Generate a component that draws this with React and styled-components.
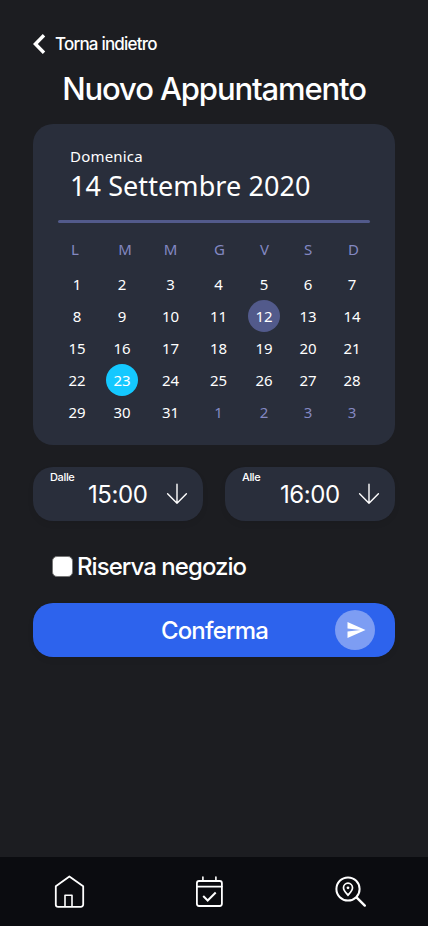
import React from "react";
import styled, { createGlobalStyle } from "styled-components";

const GlobalStyle = createGlobalStyle`
  * { box-sizing: border-box; }
  body { margin: 0; background: #1c1d21; }
  button { font: inherit; color: inherit; border: 0; padding: 0; background: none; }
`;

const Screen = styled.main`
  display: flex;
  flex-direction: column;
  width: 428px;
  height: 926px;
  overflow: hidden;
  background: #1c1d21;
  color: #fff;
  font-family: Inter, "Liberation Sans", sans-serif;
  font-weight: 500;
`;

const Content = styled.div`
  flex: 1;
  display: flex;
  flex-direction: column;
  padding: 33px 33px 0;
`;

const BackButton = styled.button`
  display: flex;
  align-items: center;
  align-self: flex-start;
  gap: 9px;
  height: 22px;
  font-size: 17px;
  letter-spacing: -0.8px;
  white-space: nowrap;
`;

const Title = styled.h1`
  margin: 14px 0 0;
  height: 55px;
  line-height: 40px;
  text-align: center;
  font-size: 31px;
  font-weight: 500;
  letter-spacing: -1.12px;
  white-space: nowrap;
`;

const Calendar = styled.section`
  height: 321px;
  padding: 20px 20px 0;
  border-radius: 20px;
  background: #292e3b;
  font-family: "Noto Sans", "Open Sans", sans-serif;
  font-weight: 400;
`;

const Weekday = styled.div`
  padding-left: 17px;
  line-height: 24px;
  font-size: 15px;
  letter-spacing: 0.2px;
`;

const FullDate = styled.div`
  padding-left: 17px;
  line-height: 36px;
  font-size: 27px;
  letter-spacing: 0.08px;
  white-space: nowrap;
`;

const Divider = styled.div`
  width: 312px;
  height: 3px;
  margin: 16px 0 0 5px;
  border-radius: 2px;
  background: #525a8b;
`;

const WeekHeader = styled.div`
  display: grid;
  grid-template-columns: 44px 56px 35px 63px 27px 60px 31px;
  margin-top: 14px;
  height: 24px;
  line-height: 24px;
  text-align: center;
  font-size: 15px;
  color: #8388c2;
`;

const Days = styled.div`
  display: grid;
  grid-template-columns: 44px 46px 51px 45px 46px 42px 46px;
  grid-auto-rows: 32px;
  justify-items: center;
  margin: 7px 0 0 2px;
`;

const Day = styled.span`
  width: 32px;
  height: 32px;
  border-radius: 50%;
  line-height: 33px;
  text-align: center;
  font-size: 15px;
  color: ${(p) => (p.$muted ? "#8388c2" : "#fff")};
  background: ${(p) => p.$fill || "transparent"};
`;

const TimeRow = styled.div`
  display: flex;
  justify-content: space-between;
  margin-top: 22px;
`;

const TimeField = styled.button`
  position: relative;
  display: flex;
  align-items: center;
  width: 170px;
  height: 54px;
  padding-left: 55px;
  border-radius: 20px;
  background: #292e3b;
  box-shadow: 0 3px 6px rgba(0, 0, 0, 0.06);
`;

const TimeLabel = styled.span`
  position: absolute;
  left: 17px;
  top: 3px;
  line-height: 14px;
  font-size: 11px;
  font-weight: 500;
  letter-spacing: -0.35px;
`;

const TimeValue = styled.span`
  width: 78px;
  text-align: left;
  font-size: 24px;
  font-weight: 400;
  letter-spacing: -0.4px;
  white-space: nowrap;
`;

const Reserve = styled.label`
  display: flex;
  align-items: center;
  gap: 4px;
  height: 32px;
  margin: 29px 0 0 19px;
  font-size: 24px;
  letter-spacing: -0.95px;
  white-space: nowrap;
`;

const Checkbox = styled.input`
  appearance: none;
  flex: none;
  width: 21px;
  height: 21px;
  margin: 0;
  border: 1px solid #767676;
  border-radius: 5px;
  background: #fff;
`;

const Confirm = styled.button`
  display: grid;
  grid-template-columns: 1fr 40px;
  align-items: center;
  height: 54px;
  margin-top: 21px;
  padding: 0 20px;
  border-radius: 20px;
  background: #2d63ed;
  box-shadow: 0 3px 6px rgba(0, 0, 0, 0.06);
  font-size: 24px;
  letter-spacing: -0.8px;
`;

const ConfirmText = styled.span`
  padding-left: 41px;
  text-align: center;
`;

const SendBadge = styled.span`
  display: grid;
  place-items: center;
  width: 40px;
  height: 40px;
  border-radius: 50%;
  background: #7d9df3;
`;

const NavBar = styled.nav`
  flex: none;
  display: grid;
  grid-template-columns: 140px 142px 36px;
  height: 69px;
  padding: 17px 0 0 51px;
  background: #0b0c10;
`;

const Icon = styled.svg`
  display: block;
  flex: none;
  fill: none;
  stroke: #fff;
  overflow: visible;
`;

const HEADERS = ["L", "M", "M", "G", "V", "S", "D"];
const DAYS = [...Array.from({ length: 31 }, (_, i) => ({ n: i + 1 })),
  ...[1, 2, 3, 3].map((n) => ({ n, muted: true }))];
const FILLS = { 12: "#525a8b", 23: "#14c8ff" };

function TimePicker({ label, value }) {
  return (
    <TimeField>
      <TimeLabel>{label}</TimeLabel>
      <TimeValue>{value}</TimeValue>
      <Icon width="22" height="22" viewBox="0 0 22 22" strokeWidth="1.4" strokeLinecap="round" strokeLinejoin="round">
        <path d="M11 1.2V20.2M1.6 10.8l9.4 9.4 9.4-9.4" />
      </Icon>
    </TimeField>
  );
}

export default function App() {
  return (
    <Screen>
      <GlobalStyle />
      <Content>
        <BackButton>
          <Icon width="13" height="20" viewBox="0 0 13 20" strokeWidth="3.4">
            <path d="M11 1.2 2.4 10l8.6 8.8" />
          </Icon>
          Torna indietro
        </BackButton>
        <Title>Nuovo Appuntamento</Title>
        <Calendar>
          <Weekday>Domenica</Weekday>
          <FullDate>14 Settembre 2020</FullDate>
          <Divider />
          <WeekHeader>
            {HEADERS.map((h, i) => <span key={i}>{h}</span>)}
          </WeekHeader>
          <Days>
            {DAYS.map((d, i) => (
              <Day key={i} $muted={d.muted} $fill={FILLS[d.n]}>{d.n}</Day>
            ))}
          </Days>
        </Calendar>
        <TimeRow>
          <TimePicker label="Dalle" value="15:00" />
          <TimePicker label="Alle" value="16:00" />
        </TimeRow>
        <Reserve>
          <Checkbox type="checkbox" />
          Riserva negozio
        </Reserve>
        <Confirm>
          <ConfirmText>Conferma</ConfirmText>
          <SendBadge>
            <Icon width="18" height="16" viewBox="0 0 18 16" stroke="none">
              <path d="M0 0v6.4L13 8 0 9.6V16L18 8z" fill="#fff" stroke="none" transform="translate(1.5 0)" />
            </Icon>
          </SendBadge>
        </Confirm>
      </Content>
      <NavBar>
        <Icon width="36" height="36" viewBox="0 0 36 36" strokeWidth="1.8" strokeLinejoin="round">
          <path d="M4.8 12.2 18.4 2.4l13.8 9.8v18.2a2.4 2.4 0 0 1-2.4 2.4H7.2a2.4 2.4 0 0 1-2.4-2.4z" />
          <path d="M14 32.8V21.3h7v11.5" strokeWidth="1.6" />
        </Icon>
        <Icon width="36" height="36" viewBox="0 0 36 36" strokeWidth="1.8" strokeLinecap="round" strokeLinejoin="round">
          <rect x="5.9" y="7" width="25" height="25" rx="2.2" />
          <path d="M5.9 12.6h25M11.9 3v4M24.9 3v4" strokeWidth="1.6" />
          <path d="m12.2 22 4.5 4.5 8-8" strokeWidth="2" strokeLinecap="butt" strokeLinejoin="miter" />
        </Icon>
        <Icon width="36" height="36" viewBox="0 0 36 36" strokeWidth="2" strokeLinecap="round">
          <circle cx="15" cy="15" r="11.6" />
          <path d="m23.8 23.6 8 8" strokeWidth="2.4" />
          <path d="M15 21.2c-1.6-2-4.5-4.5-4.5-7.5a4.5 4.5 0 0 1 9 0c0 3-2.9 5.5-4.5 7.5z" strokeWidth="1.7" />
          <circle cx="15" cy="13.8" r="1.4" fill="#fff" stroke="none" />
        </Icon>
      </NavBar>
    </Screen>
  );
}
